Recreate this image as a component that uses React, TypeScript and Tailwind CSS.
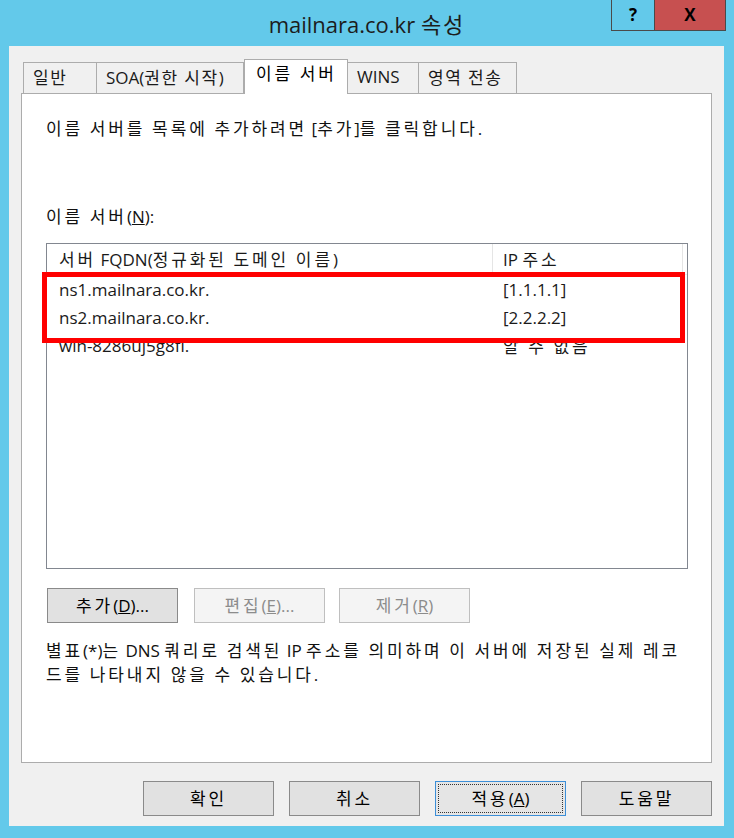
import * as React from "react";

const font = "font-['Open_Sans','Noto_Sans_CJK_KR',sans-serif]";

// Hangul runs are spaced out a little, like the Malgun Gothic in the capture
function K({ t, tight }: { t: string; tight?: boolean }) {
  const parts = t.split(/([\uAC00-\uD7A3](?:[\uAC00-\uD7A3 ]*[\uAC00-\uD7A3])?)/);
  const cls = tight
    ? "font-['Noto_Sans_CJK_KR',sans-serif] tracking-[1.6px]"
    : "font-['Noto_Sans_CJK_KR',sans-serif] tracking-[2.9px]";
  return (
    <>
      {parts.map((p, i) =>
        i % 2 === 1 ? (
          <span key={i} className={cls}>
            {p}
          </span>
        ) : (
          <React.Fragment key={i}>{p}</React.Fragment>
        )
      )}
    </>
  );
}

function Tab({ label, w, active }: { label: string; w: string; active?: boolean }) {
  if (active) {
    return (
      <div
        className={`${w} relative z-10 -mb-px h-[35px] border border-b-0 border-[#acacac] bg-white pl-[11px] pt-[1px] text-[17px] leading-[24px] text-black`}
      >
        <K t={label} />
      </div>
    );
  }
  return (
    <div
      className={`${w} -ml-px h-[31px] border border-b-0 border-[#acacac] bg-[#f0f0f0] pl-[9px] pt-[2px] text-[17px] leading-[24px] text-[#1a1a1a] first:ml-0`}
    >
      <K t={label} tight />
    </div>
  );
}

function Btn({
  children,
  disabled,
  focused,
  className = "",
}: {
  children: React.ReactNode;
  disabled?: boolean;
  focused?: boolean;
  className?: string;
}) {
  if (disabled) {
    return (
      <div
        className={`${className} flex h-[35px] w-[131px] items-center justify-center border border-[#bfbfbf] bg-[#f4f4f4] text-[17px] text-[#8c8c8c]`}
      >
        <span>{children}</span>
      </div>
    );
  }
  if (focused) {
    return (
      <div
        className={`${className} flex h-[35px] w-[131px] items-center justify-center border border-[#3c8fd8] bg-[#e5e5e5] p-[2px] text-[17px] text-black`}
      >
        <div className="flex h-full w-full items-center justify-center border border-dotted border-[#333]">
          <span>{children}</span>
        </div>
      </div>
    );
  }
  return (
    <div
      className={`${className} flex h-[35px] w-[131px] items-center justify-center border border-[#8a8a8a] bg-[#e1e1e1] text-[17px] text-black`}
    >
      <span>{children}</span>
    </div>
  );
}

const rows = [
  { name: "ns1.mailnara.co.kr.", ip: "[1.1.1.1]" },
  { name: "ns2.mailnara.co.kr.", ip: "[2.2.2.2]" },
  { name: "win-8286uj5g8fl.", ip: "알 수 없음" },
];

export default function App() {
  return (
    <div className={`${font} flex h-[838px] w-[734px] flex-col bg-[#63c9ea]`}>
      {/* title bar */}
      <div className="relative flex h-[46px] items-center justify-center pt-[2px] text-[22px] text-[#1c1c1c]">
        <span>
          mailnara.co.kr{" "}
          <span className="font-['Noto_Sans_CJK_KR',sans-serif] tracking-[2px]">속성</span>
        </span>
        <div className="absolute right-[8px] top-0 flex h-[31px] border border-t-0 border-[#4a4a4a]">
          <div className="flex w-[43px] items-center justify-center border-r border-[#4a4a4a] text-[17px] font-bold text-black">
            ?
          </div>
          <div className="flex w-[70px] items-center justify-center bg-[#c75050] text-[17px] font-bold text-black">
            X
          </div>
        </div>
      </div>

      {/* window body */}
      <div className="ml-[9px] mr-[10px] flex h-[780px] flex-col bg-[#f0f0f0] px-[12px] pt-[13px]">
        <div className="flex items-end pl-[2px]">
          <Tab label="일반" w="w-[74px]" />
          <Tab label="SOA(권한 시작)" w="w-[148px]" />
          <Tab label="이름 서버" w="w-[104px]" active />
          <Tab label="WINS" w="w-[72px]" />
          <Tab label="영역 전송" w="w-[99px]" />
        </div>

        <div className="flex h-[670px] flex-col border border-[#acacac] bg-white px-[24px] pt-[23px]">
          <p className="h-[22px] whitespace-nowrap text-[17px] leading-[22px] text-[#111]">
            <K t="이름 서버를 목록에 추가하려면" /> [<K t="추가" />]<K t="를 클릭합니다" />.
          </p>
          <p className="mt-[66px] h-[22px] text-[17px] leading-[22px] text-[#111]">
            <K t="이름 서버" />(<span className="underline">N</span>):
          </p>

          {/* list view */}
          <div className="relative mt-[16px] h-[326px] w-[642px] border border-[#828790] bg-white">
            <div className="flex h-[31px] items-center border-b border-[#f0f0f0] text-[17px] text-[#1a1a1a]">
              <div className="flex h-full w-[446px] items-center border-r border-[#e5e5e5] pl-[12px]">
                <span>
                  <K t="서버" /> FQDN(<K t="정규화된 도메인 이름" />)
                </span>
              </div>
              <div className="flex h-full w-[190px] items-center border-r border-[#e5e5e5] pl-[10px]">
                <span>
                  IP <K t="주소" />
                </span>
              </div>
            </div>
            <div className="pt-[1px]">
              {rows.map((r) => (
                <div key={r.name} className="flex h-[28px] items-center text-[17px] text-[#1a1a1a]">
                  <div className="w-[446px] pl-[12px]">{r.name}</div>
                  <div className="pl-[10px]">
                    <K t={r.ip} />
                  </div>
                </div>
              ))}
            </div>
            <div className="absolute left-[-5px] top-[28px] h-[71px] w-[643px] border-[5px] border-[#ff0000]" />
          </div>

          <div className="mt-[19px] flex pl-[1px]">
            <Btn>
              <K t="추가" />(<span className="underline">D</span>)...
            </Btn>
            <Btn disabled className="ml-[16px]">
              <K t="편집" />(<span className="underline">E</span>)...
            </Btn>
            <Btn disabled className="ml-[14px]">
              <K t="제거" />(<span className="underline">R</span>)
            </Btn>
          </div>

          <p className="mt-[15px] whitespace-nowrap text-[17px] leading-[23px] text-[#111]">
            <K t="별표" />(*)<K t="는" /> DNS <K t="쿼리로 검색된" /> IP{" "}
            <K t="주소를 의미하며 이 서버에 저장된 실제 레코" />
            <br />
            <K t="드를 나타내지 않을 수 있습니다" />.
          </p>
        </div>

        <div className="mt-[18px] flex justify-end gap-[15px]">
          <Btn>
            <K t="확인" />
          </Btn>
          <Btn>
            <K t="취소" />
          </Btn>
          <Btn focused>
            <K t="적용" />(<span className="underline">A</span>)
          </Btn>
          <Btn>
            <K t="도움말" />
          </Btn>
        </div>
      </div>
    </div>
  );
}
